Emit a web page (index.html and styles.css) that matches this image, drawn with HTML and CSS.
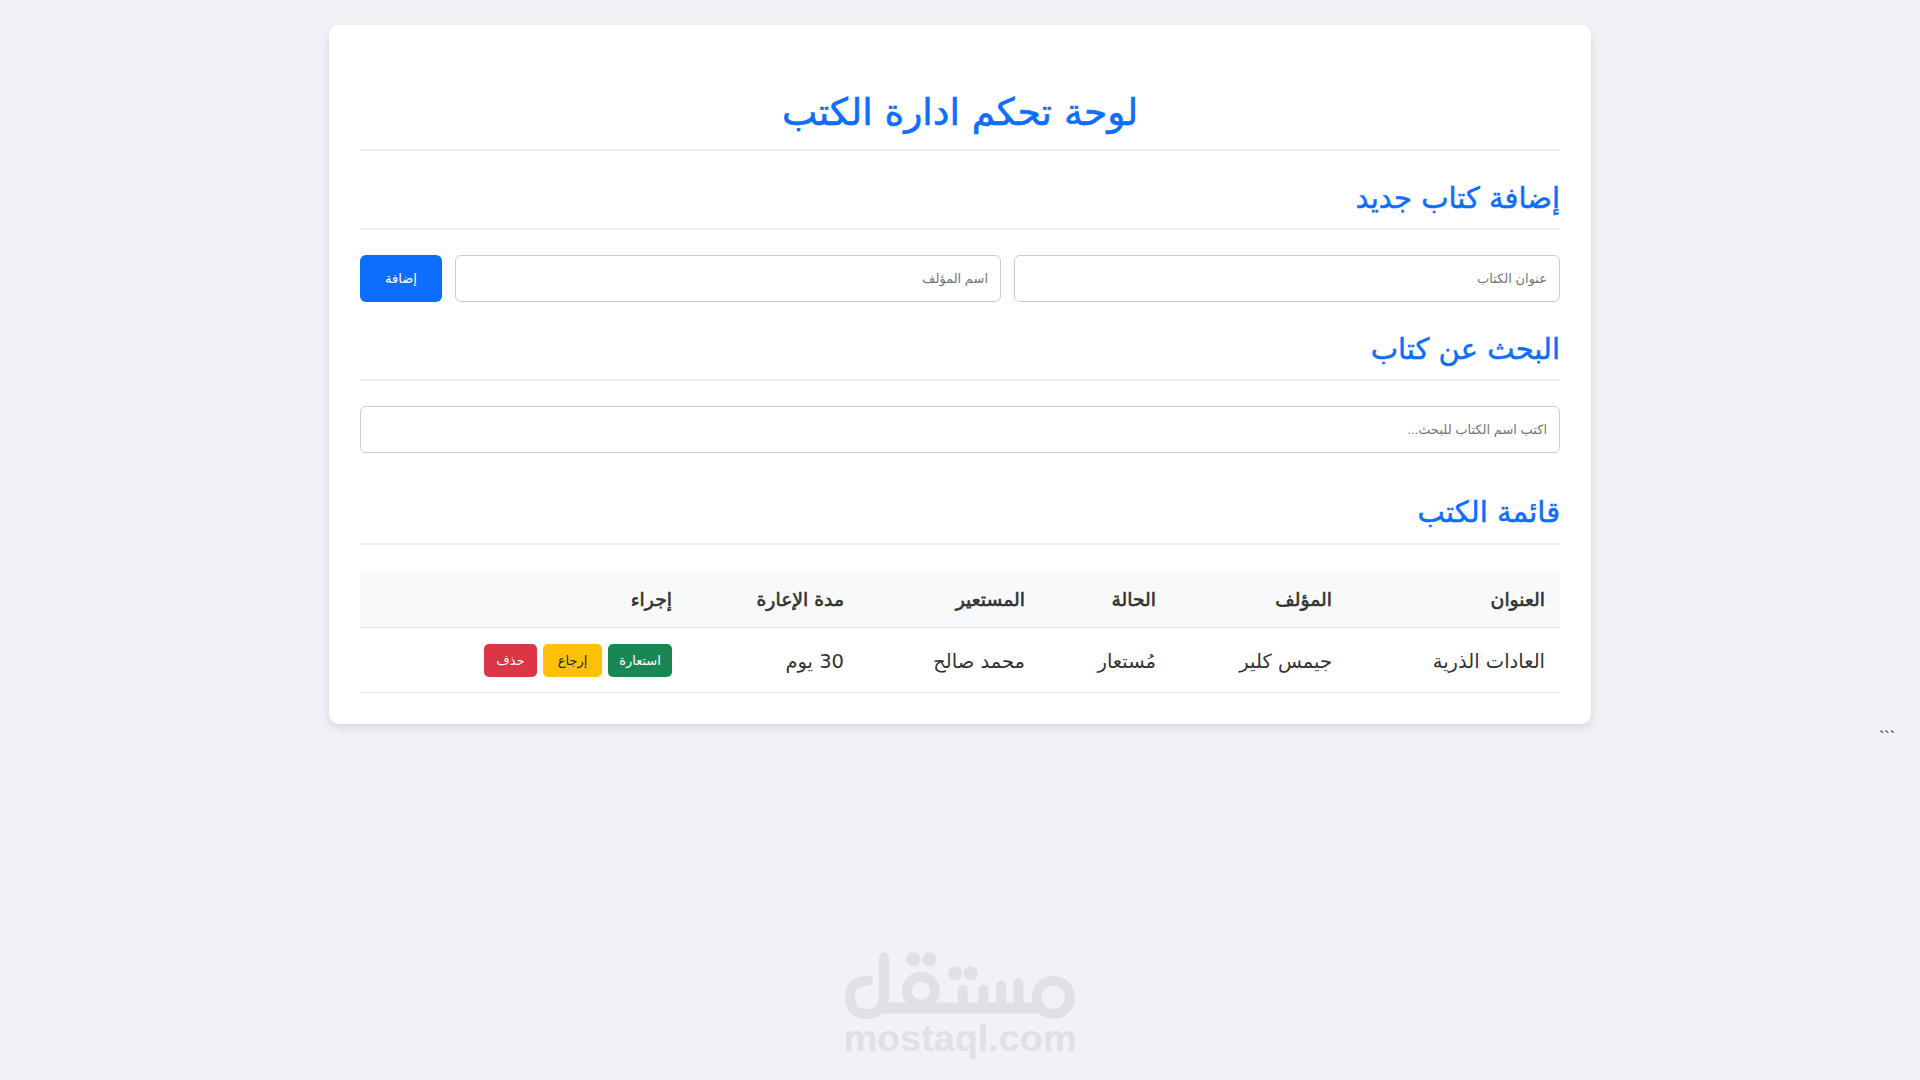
FILE: index.html
```html
<!DOCTYPE html>
<html lang="ar" dir="rtl">
<head>
    <meta charset="UTF-8">
    <meta name="viewport" content="width=device-width, initial-scale=1.0">
    <title>لوحة تحكم ادارة الكتب</title>
    <link rel="stylesheet" href="styles.css">
</head>
<body>
    <div class="container">
        <h1>لوحة تحكم ادارة الكتب</h1>

        <h2>إضافة كتاب جديد</h2>
        <div class="add-form">
            <input type="text" class="field" placeholder="عنوان الكتاب">
            <input type="text" class="field" placeholder="اسم المؤلف">
            <button class="btn btn-add">إضافة</button>
        </div>

        <h2>البحث عن كتاب</h2>
        <input type="text" class="field search-field" placeholder="اكتب اسم الكتاب للبحث...">

        <h2 class="list-title">قائمة الكتب</h2>
        <table class="books">
            <thead>
                <tr>
                    <th class="col-title">العنوان</th>
                    <th class="col-author">المؤلف</th>
                    <th class="col-status">الحالة</th>
                    <th class="col-borrower">المستعير</th>
                    <th class="col-period">مدة الإعارة</th>
                    <th>إجراء</th>
                </tr>
            </thead>
            <tbody>
                <tr>
                    <td>العادات الذرية</td>
                    <td>جيمس كلير</td>
                    <td>مُستعار</td>
                    <td>محمد صالح</td>
                    <td>30 يوم</td>
                    <td>
                        <div class="actions">
                            <button class="btn btn-small btn-green">استعارة</button>
                            <button class="btn btn-small btn-yellow">إرجاع</button>
                            <button class="btn btn-small btn-red">حذف</button>
                        </div>
                    </td>
                </tr>
            </tbody>
        </table>
    </div>
    <div class="stray">```</div>

    <div class="watermark">
        <svg class="watermark-logo" viewBox="0 0 960 300" aria-hidden="true">
            <g fill="none" stroke="#dfe1e4" stroke-width="30" stroke-linecap="round" stroke-linejoin="round">
                <path d="M252 112 V225 Q252 282 202 282 Q150 282 150 230 Q150 182 204 182"/>
                <path d="M250 264 H720" stroke-width="33"/>
                <circle cx="363" cy="212" r="42"/>
                <path d="M488 262 V209"/>
                <path d="M550 262 V209"/>
                <path d="M603 262 V197"/>
                <path d="M655 262 V189"/>
                <circle cx="760" cy="232" r="50"/>
            </g>
            <g fill="#dfe1e4">
                <circle cx="340" cy="118" r="21"/>
                <circle cx="388" cy="118" r="21"/>
                <circle cx="465" cy="160" r="21"/>
                <circle cx="512" cy="160" r="21"/>
            </g>
        </svg>
        <div class="watermark-text">mostaql.com</div>
    </div>
</body>
</html>
```

FILE: styles.css
```css
* {
    box-sizing: border-box;
}

body {
    margin: 0;
    padding: 25px;
    min-height: 100vh;
    background-color: #f0f2f5;
    color: #333;
    font-family: "DejaVu Sans", sans-serif;
    font-size: 16px;
}

.container {
    width: 1262px;
    margin: 0 auto;
    padding: 0 31px 31px;
    background-color: #fff;
    border-radius: 10px;
    box-shadow: 0 4px 10px rgba(0, 0, 0, 0.1);
}

h1 {
    margin: 0;
    padding-top: 57px;
    height: 126px;
    border-bottom: 2px solid #eee;
    color: #0d6efd;
    font-size: 37.5px;
    font-weight: 400;
    -webkit-text-stroke: 0.6px #0d6efd;
    line-height: 60px;
    text-align: center;
}

h2 {
    margin: 0 0 25px;
    height: 79px;
    padding-top: 27px;
    border-bottom: 2px solid #eee;
    color: #0d6efd;
    font-size: 29px;
    font-weight: 400;
    -webkit-text-stroke: 0.5px #0d6efd;
    line-height: 40px;
}

.add-form {
    display: flex;
    gap: 13px;
    height: 47px;
}

.field {
    height: 47px;
    padding: 0 12px;
    border: 1px solid #ccc;
    border-radius: 6px;
    background-color: #fff;
    font-family: "Liberation Sans", "DejaVu Sans", sans-serif;
    font-size: 13px;
}

.add-form .field {
    flex: 1;
}

.search-field {
    display: block;
    width: 100%;
}

.btn {
    border: 0;
    border-radius: 6px;
    font-family: "Liberation Sans", "DejaVu Sans", sans-serif;
    font-size: 13px;
}

.btn-add {
    width: 82px;
    background-color: #0d6efd;
    color: #fff;
}

.list-title {
    height: 92px;
    padding-top: 39px;
}

.books {
    width: 100%;
    border-collapse: collapse;
    table-layout: fixed;
}

.books th,
.books td {
    border-bottom: 1px solid #dee2e6;
    text-align: right;
}

.books th {
    height: 57px;
    padding: 2px 15px 0;
    background-color: #f8f9fa;
    font-size: 18.8px;
    font-weight: 400;
    -webkit-text-stroke: 0.6px #333;
}

.books td {
    height: 65px;
    padding: 4px 15px 0;
    font-size: 19.5px;
}

.col-title {
    width: 213px;
}

.col-author {
    width: 176px;
}

.col-status {
    width: 131px;
}

.col-borrower {
    width: 181px;
}

.col-period {
    width: 172px;
}

.actions {
    display: flex;
    gap: 6px;
    margin-top: -3px;
}

.btn-small {
    height: 33px;
    padding: 0;
    border-radius: 5px;
    font-size: 13px;
}

.btn-green {
    width: 64px;
    background-color: #198754;
    color: #fff;
}

.btn-yellow {
    width: 59px;
    background-color: #ffc107;
    color: #212529;
}

.btn-red {
    width: 53px;
    background-color: #dc3545;
    color: #fff;
}

.stray {
    margin-top: 2px;
    font-family: "Liberation Sans", sans-serif;
    font-size: 16px;
    line-height: 24px;
}

.watermark {
    position: absolute;
    left: 800px;
    top: 920px;
    width: 320px;
}

.watermark-logo {
    display: block;
    width: 320px;
    height: 100px;
}

.watermark-text {
    direction: ltr;
    margin-top: -2px;
    color: #dfe1e4;
    font-family: "Liberation Sans", sans-serif;
    font-size: 37.8px;
    font-weight: 700;
    line-height: 40px;
    text-align: center;
}
```
